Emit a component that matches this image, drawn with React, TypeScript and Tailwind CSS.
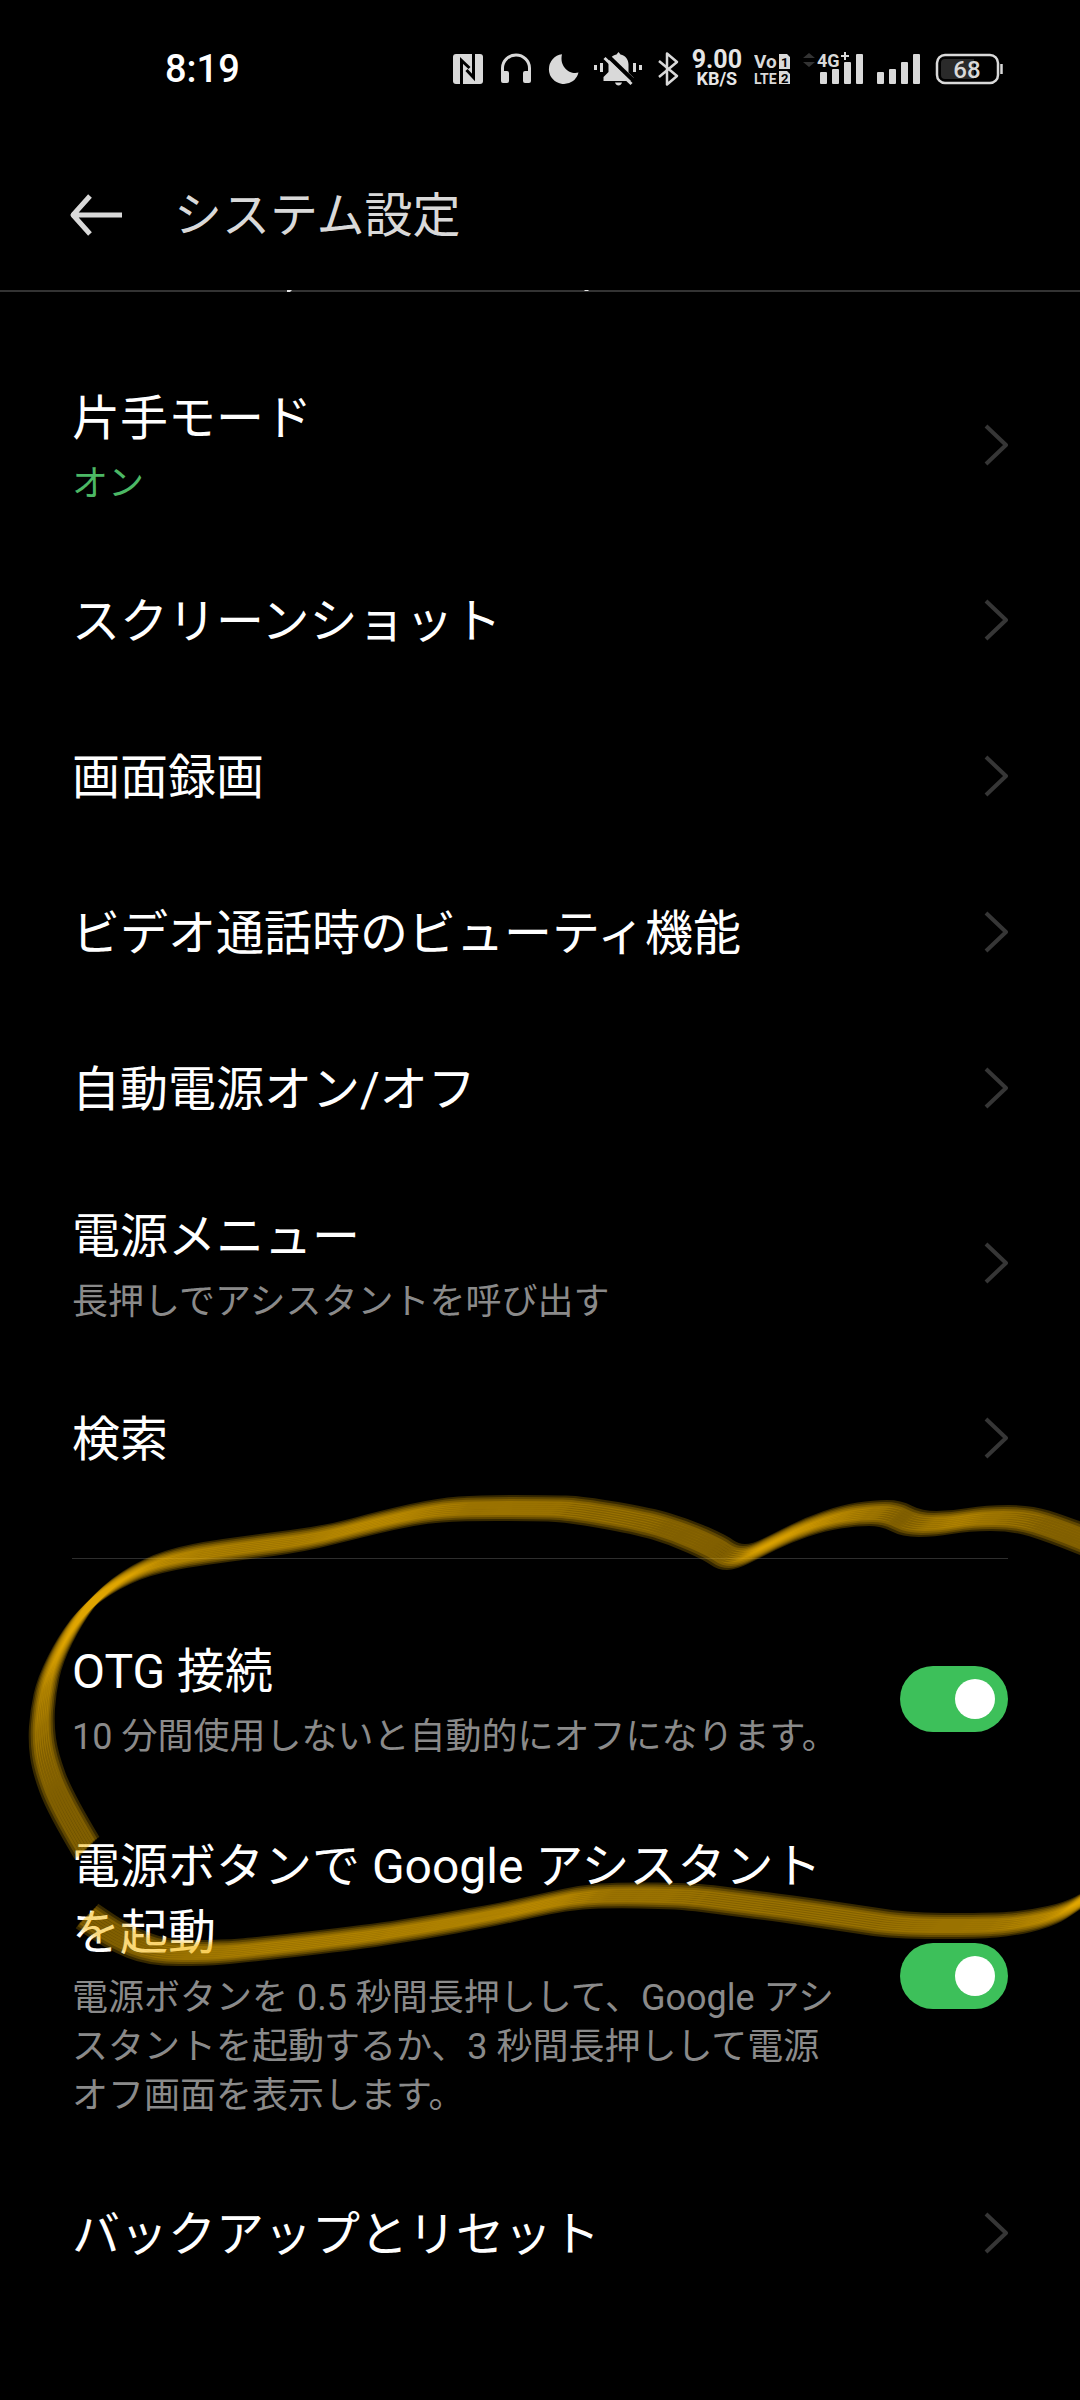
import { useState } from "react";

type Point = [number, number];

interface Item {
  title: string;
  summary?: string;
  active?: boolean;
}

const ITEMS: Item[] = [
  { title: "片手モード", summary: "オン", active: true },
  { title: "スクリーンショット" },
  { title: "画面録画" },
  { title: "ビデオ通話時のビューティ機能" },
  { title: "自動電源オン/オフ" },
  { title: "電源メニュー", summary: "長押しでアシスタントを呼び出す" },
  { title: "検索" },
];

// Highlighter strokes, as points that the pen passes through
const UPPER_STROKE: Point[] = [
  [87, 1848], [60, 1803], [45, 1762], [41, 1733], [43, 1702], [50, 1670], [70, 1630], [95, 1597],
  [137, 1570], [179, 1557], [250, 1547], [314, 1539], [375, 1523], [429, 1511], [471, 1508],
  [540, 1508], [574, 1509], [643, 1521], [680, 1532], [716, 1548], [728, 1557], [744, 1557],
  [768, 1545], [798, 1530], [833, 1518], [865, 1513], [891, 1513], [912, 1524], [943, 1524],
  [977, 1518], [1022, 1518], [1057, 1529], [1110, 1550],
];

const LOWER_STROKE: Point[] = [
  [1110, 1880], [1080, 1903], [1057, 1915], [1022, 1923], [988, 1926], [902, 1926], [850, 1918],
  [781, 1908], [733, 1902], [688, 1896], [609, 1895], [574, 1898], [540, 1905], [500, 1914],
  [429, 1927], [357, 1938], [250, 1950], [214, 1953], [157, 1953], [118, 1937], [87, 1916],
];

// Offsets across the slanted nib of the pen
const NIB = [-9, -7, -5, -3, -1, 1, 3, 5, 7, 9];

function smoothPath(points: Point[]) {
  let d = `M${points[0][0]} ${points[0][1]}`;
  for (let i = 1; i < points.length - 1; i++) {
    const [x, y] = points[i];
    const [nx, ny] = points[i + 1];
    d += ` Q${x} ${y} ${(x + nx) / 2} ${(y + ny) / 2}`;
  }
  const [lx, ly] = points[points.length - 1];
  return `${d} L${lx} ${ly}`;
}

function Highlighter() {
  return (
    <svg
      className="absolute left-0 top-0 w-full h-auto overflow-visible pointer-events-none"
      viewBox="0 1516 1080 460"
      fill="none"
      stroke="#f5b800"
      strokeWidth="8"
      strokeOpacity="0.22"
      aria-hidden="true"
    >
      {NIB.map((n) => (
        <g key={n} transform={`translate(${n} ${-n})`}>
          <path d={smoothPath(UPPER_STROKE)} />
          <path d={smoothPath(LOWER_STROKE)} />
        </g>
      ))}
    </svg>
  );
}

function SignalBars({ x }: { x: number }) {
  return (
    <g fill="#d9d9d9">
      <rect x={x} y="22" width="7" height="12" rx="1" />
      <rect x={x + 12} y="19" width="7" height="15" rx="1" />
      <rect x={x + 24} y="12" width="7" height="22" rx="1" />
      <rect x={x + 36} y="4" width="7" height="30" rx="1" />
    </g>
  );
}

function StatusBar() {
  return (
    <div className="h-[138px] pl-[165px] pr-[76px] flex items-center justify-between">
      <time className="text-[38px] leading-none font-medium text-white">8:19</time>
      <div className="flex items-center gap-3">
        {/* NFC */}
        <svg width="36" height="38" viewBox="0 0 36 38" fill="none" aria-label="NFC">
          <rect x="1" y="4" width="30" height="30" rx="3" fill="#d9d9d9" />
          <path d="M9.500 34V10.500l8 7.500M21.500 4v23.500l-7-7.500" stroke="#000" strokeWidth="3" />
        </svg>
        {/* Headphones */}
        <svg width="36" height="38" viewBox="0 0 36 38" fill="none" aria-label="ヘッドホン">
          <path d="M2.500 28V18a13.500 13 0 0 1 27 0v10" stroke="#d9d9d9" strokeWidth="3" />
          <path d="M1 21h6a2 2 0 0 1 2 2v8a2 2 0 0 1-2 2H3a2 2 0 0 1-2-2zM31 21h-6a2 2 0 0 0-2 2v8a2 2 0 0 0 2 2h4a2 2 0 0 0 2-2z" fill="#d9d9d9" />
        </svg>
        {/* Do not disturb */}
        <svg width="34" height="38" viewBox="0 0 34 38" aria-label="サイレントモード">
          <path d="M14 4.200A15 15 0 1 0 30.500 22.500C22 25 11 17 14 4.200z" fill="#d9d9d9" />
        </svg>
        {/* Vibrate */}
        <svg width="50" height="38" viewBox="0 0 50 38" fill="none" aria-label="バイブレーション">
          <path d="M24.500 2l2 2.500c5 1 8 5 8 10v8l5 5v3.500H9.500v-4l5-5v-7.500c0-5 3-9 8-10z" fill="#d9d9d9" />
          <path d="M21 32.500h7c-1 4-6 4-7 0z" fill="#d9d9d9" />
          <path d="M13 5l28 27" stroke="#000" strokeWidth="4" />
          <path d="M10.500 8l27 26" stroke="#d9d9d9" strokeWidth="3" />
          <path d="M0 15h3v5H0zM6 13h3v9H6zM39 13h3v9h-3zM45 15h3v5h-3z" fill="#d9d9d9" />
        </svg>
        {/* Bluetooth */}
        <svg width="24" height="38" viewBox="0 0 24 38" fill="none" stroke="#d9d9d9" strokeWidth="2.500" strokeLinejoin="round" aria-label="Bluetooth">
          <path d="M3 11l18 15-10 8.500V3.500l10 8.500L3 27" />
        </svg>
        <div className="flex flex-col items-center text-[#e6e6e6] font-bold">
          <span className="text-[25px] leading-5">9.00</span>
          <span className="text-[18px] leading-[18px]">KB/S</span>
        </div>
        {/* VoLTE */}
        <svg width="36" height="38" viewBox="1 0 36 38" fill="#d9d9d9" aria-label="VoLTE 2" className="font-bold">
          <text x="1" y="18" fontSize="19">Vo</text>
          <text x="1" y="34" fontSize="14">LTE</text>
          <path d="M26 4h8l3 3v12H26zM26 21h8l3 3v10H26z" />
          <text x="28" y="17" fontSize="13" fill="#000">1</text>
          <text x="28" y="33" fontSize="13" fill="#000">2</text>
        </svg>
        <svg width="62" height="38" viewBox="0 0 62 38" aria-label="4G+" className="font-bold">
          <path d="M1 8l6-5 6 5zM1 12h12l-6 5z" fill="#333" />
          <SignalBars x={18} />
          <text x="15" y="17" fontSize="18" fill="#d9d9d9" stroke="#000" strokeWidth="3" paintOrder="stroke">4G</text>
          <path d="M39 6h8M43 2v8" stroke="#d9d9d9" strokeWidth="2" />
        </svg>
        <svg width="44" height="38" viewBox="0 0 44 38" aria-label="電波強度">
          <SignalBars x={1} />
        </svg>
        {/* Battery */}
        <svg width="72" height="38" viewBox="0 0 72 38" fill="none" aria-label="バッテリー 68%">
          <rect x="5" y="5" width="61" height="28" rx="8" stroke="#d9d9d9" strokeWidth="2.500" />
          <path d="M13 9h29v20H13a4 4 0 0 1-4-4V13a4 4 0 0 1 4-4z" fill="#2a2a2a" />
          <path d="M69.500 14v10" stroke="#d9d9d9" strokeWidth="2.500" />
          <text x="35" y="28" textAnchor="middle" fontSize="24" fontWeight="500" fill="#d9d9d9">68</text>
        </svg>
      </div>
    </div>
  );
}

function LinkRow({ title, summary, active }: Item) {
  return (
    <button
      type="button"
      className="w-full min-h-[156px] px-[72px] flex items-center justify-between gap-12 text-left"
    >
      <span className="pt-[38px] pb-[34px] flex flex-col gap-2">
        <span className="text-[48px] leading-[66px] text-white">{title}</span>
        {summary && (
          <span className={active ? "text-[36px] leading-[48px] text-[#4cb865]" : "text-[36px] leading-[48px] text-[#8a8a8a]"}>
            {summary}
          </span>
        )}
      </span>
      <svg className="shrink-0" width="24" height="44" viewBox="0 0 24 44" fill="none" stroke="#363636" strokeWidth="4" strokeLinejoin="round" aria-hidden="true">
        <path d="M2 3l20 19L2 41" />
      </svg>
    </button>
  );
}

function SwitchRow({ id, title, summary }: { id: string; title: string; summary: string }) {
  const [on, setOn] = useState(true);

  return (
    <div className="px-[72px] flex items-center justify-between gap-12">
      <label htmlFor={id} className="flex-1 pt-[38px] pb-[34px] flex flex-col gap-2">
        <span className="text-[48px] leading-[66px] text-white">{title}</span>
        <span className="text-[36px] leading-[49px] text-[#8a8a8a]">{summary}</span>
      </label>
      <input
        id={id}
        type="checkbox"
        role="switch"
        checked={on}
        onChange={(e) => setOn(e.target.checked)}
        className="appearance-none shrink-0 w-[108px] h-[66px] px-[13px] rounded-full bg-neutral-700 checked:bg-[#3dc05a] flex items-center justify-start checked:justify-end before:block before:size-10 before:rounded-full before:bg-white"
      />
    </div>
  );
}

export default function App() {
  return (
    <div
      lang="ja"
      className="min-h-screen overflow-hidden bg-black font-['Roboto','Noto_Sans_CJK_JP',sans-serif]"
    >
      <StatusBar />

      <header className="relative h-[154px] px-[66px] border-b-2 border-[#333333] flex items-center gap-12">
        <button type="button" aria-label="戻る">
          <svg width="60" height="48" viewBox="0 0 60 48" fill="none" stroke="#d9d9d9" strokeWidth="5" strokeLinejoin="round">
            <path d="M56 25H7M24 6L7 25l17 19" />
          </svg>
        </button>
        <h1 className="pt-1 text-[48px] leading-[66px] text-[#d9d9d9]">システム設定</h1>
        {/* Lower tips of the row scrolled under the header */}
        <svg className="absolute left-0 -bottom-0.5" width="600" height="2" viewBox="0 0 600 2" fill="#e5e5e5" aria-hidden="true">
          <path d="M287 0h5l-2 2h-3zM584 0h5l-1 1h-3z" />
        </svg>
      </header>

      <main className="pt-14">
        {ITEMS.map((item) => (
          <LinkRow key={item.title} {...item} />
        ))}

        <section className="relative pt-[42px]">
          <hr className="mx-[72px] mb-[42px] border-0 h-px bg-[#2e2e2e]" />
          <SwitchRow id="otg" title="OTG 接続" summary="10 分間使用しないと自動的にオフになります。" />
          <SwitchRow
            id="assistant"
            title="電源ボタンで Google アシスタントを起動"
            summary="電源ボタンを 0.5 秒間長押しして、Google アシスタントを起動するか、3 秒間長押しして電源オフ画面を表示します。"
          />
          <LinkRow title="バックアップとリセット" />
          <Highlighter />
        </section>
      </main>
    </div>
  );
}
